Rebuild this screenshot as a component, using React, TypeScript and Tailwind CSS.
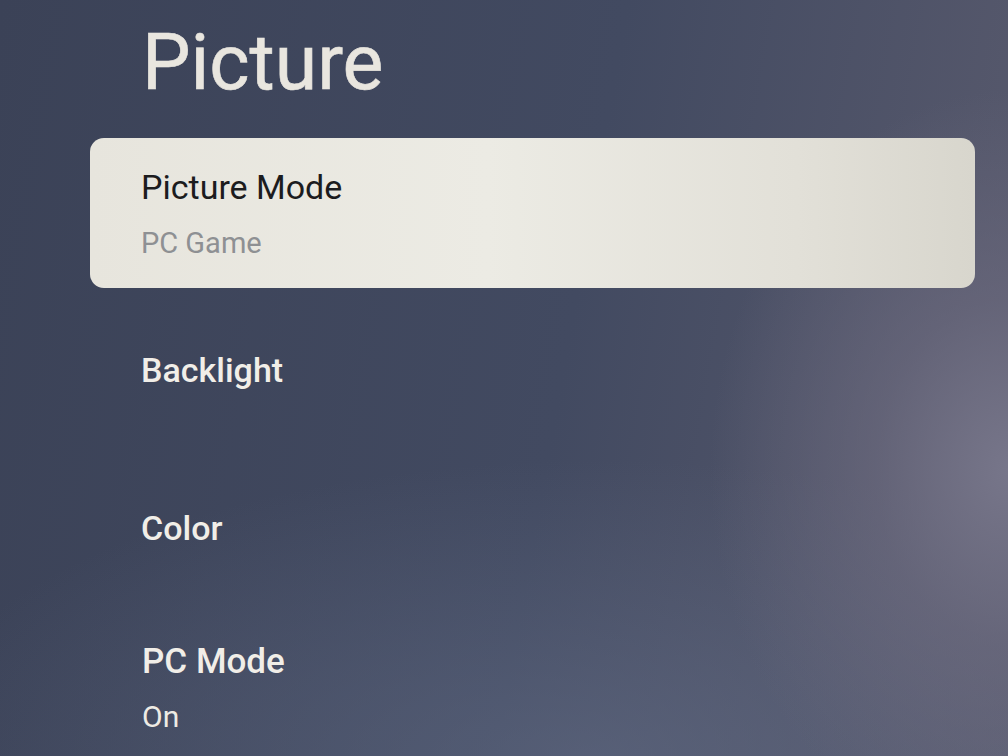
import React from 'react';

const rows = [
  { label: 'Backlight', gap: 'mt-[62px]' },
  { label: 'Color', gap: 'mt-[118px]' },
];

export default function App() {
  return (
    <div
      className="w-[1008px] h-[756px] overflow-hidden font-['Roboto',sans-serif] bg-[#3e455b] bg-[radial-gradient(ellipse_300px_380px_at_1010px_470px,#77768a_0%,rgba(110,108,128,0.6)_45%,rgba(62,69,91,0)_100%),radial-gradient(ellipse_700px_300px_at_600px_760px,rgba(100,110,135,0.55)_0%,rgba(62,69,91,0)_100%),linear-gradient(100deg,#3b4257_0%,#424a61_55%,#5a5b6e_100%)]"
    >
      <h1 className="pl-[142px] pt-[25px] text-[77px] leading-none font-normal text-[#e9e6df] [-webkit-text-stroke:0.6px_#e9e6df]">
        Picture
      </h1>

      {/* selected item */}
      <div className="ml-[90px] mt-[36px] w-[885px] rounded-[14px] bg-[linear-gradient(90deg,#e7e5dd_0%,#ecebe4_45%,#e2e0d8_80%,#d8d6cd_100%)] pl-[51px] pt-[30px] pb-[28px]">
        <div className="text-[34px] leading-[38px] text-[#1c1c1e]">Picture Mode</div>
        <div className="mt-[20px] text-[29px] leading-[34px] text-[#8e9093]">PC Game</div>
      </div>

      {rows.map((r) => (
        <div
          key={r.label}
          className={`${r.gap} pl-[141px] text-[34px] leading-[40px] font-medium text-[#f1eee8]`}
        >
          {r.label}
        </div>
      ))}

      <div className="mt-[94px] pl-[142px]">
        <div className="text-[35px] leading-[40px] font-medium text-[#f1eee8]">PC Mode</div>
        <div className="mt-[18px] text-[30px] leading-[34px] text-[#eeebe4]">On</div>
      </div>
    </div>
  );
}
